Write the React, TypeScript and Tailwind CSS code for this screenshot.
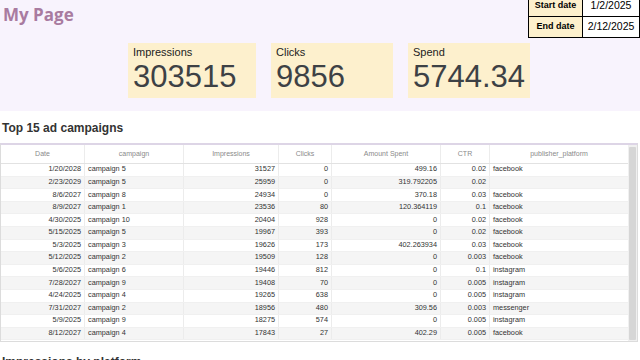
import React from "react";

type Row = {
  date: string;
  campaign: string;
  impressions: number;
  clicks: number;
  spent: string;
  ctr: string;
  platform: string;
};

// only the rows that show above the table's scroll edge
const ROWS: Row[] = [
  { date: "1/20/2028", campaign: "campaign 5", impressions: 31527, clicks: 0, spent: "499.16", ctr: "0.02", platform: "facebook" },
  { date: "2/23/2029", campaign: "campaign 5", impressions: 25959, clicks: 0, spent: "319.792205", ctr: "0.02", platform: "" },
  { date: "8/6/2027", campaign: "campaign 8", impressions: 24934, clicks: 0, spent: "370.18", ctr: "0.03", platform: "facebook" },
  { date: "8/9/2027", campaign: "campaign 1", impressions: 23536, clicks: 80, spent: "120.364119", ctr: "0.1", platform: "facebook" },
  { date: "4/30/2025", campaign: "campaign 10", impressions: 20404, clicks: 928, spent: "0", ctr: "0.02", platform: "facebook" },
  { date: "5/15/2025", campaign: "campaign 5", impressions: 19967, clicks: 393, spent: "0", ctr: "0.02", platform: "facebook" },
  { date: "5/3/2025", campaign: "campaign 3", impressions: 19626, clicks: 173, spent: "402.263934", ctr: "0.03", platform: "facebook" },
  { date: "5/12/2025", campaign: "campaign 2", impressions: 19509, clicks: 128, spent: "0", ctr: "0.003", platform: "facebook" },
  { date: "5/6/2025", campaign: "campaign 6", impressions: 19446, clicks: 812, spent: "0", ctr: "0.1", platform: "instagram" },
  { date: "7/28/2027", campaign: "campaign 9", impressions: 19408, clicks: 70, spent: "0", ctr: "0.005", platform: "instagram" },
  { date: "4/24/2025", campaign: "campaign 4", impressions: 19265, clicks: 638, spent: "0", ctr: "0.005", platform: "instagram" },
  { date: "7/31/2027", campaign: "campaign 2", impressions: 18956, clicks: 480, spent: "309.56", ctr: "0.003", platform: "messenger" },
  { date: "5/9/2025", campaign: "campaign 9", impressions: 18275, clicks: 574, spent: "0", ctr: "0.005", platform: "instagram" },
  { date: "8/12/2027", campaign: "campaign 4", impressions: 17843, clicks: 27, spent: "402.29", ctr: "0.005", platform: "facebook" },
];

const HEADERS = ["Date", "campaign", "Impressions", "Clicks", "Amount Spent", "CTR", "publisher_platform"];

const GRID = "grid grid-cols-[84px_99px_95px_53px_109px_49px_138px]";

function Kpi({ label, value, width }: { label: string; value: string; width: string }) {
  return (
    <div className={`${width} h-[55px] bg-[#fdf0cd] pl-[5px] pt-[3px]`}>
      <div className="text-[11px] leading-[13px] text-[#222]">{label}</div>
      <div className="mt-[1.5px] text-[31px] leading-[31px] text-[#3d4145]">{value}</div>
    </div>
  );
}

export default function App() {
  return (
    <div className="h-[360px] w-[640px] overflow-hidden bg-white font-['Liberation_Sans',Arial,sans-serif] antialiased">
      <header className="h-[111px] bg-[#f8f3fd]">
        <div className="flex h-[43px] items-start justify-between">
          <h1 className="pl-[3px] pt-[3px] font-['Open_Sans',sans-serif] text-[17px] font-bold leading-[24px] text-[#a97ba0]">
            My Page
          </h1>
          <table className="-mt-[5px] border-collapse text-[9px]">
            <tbody>
              <tr className="h-[21px]">
                <td className="w-[54px] border border-black bg-[#fdf0cd] text-center font-bold">Start date</td>
                <td className="w-[57px] border border-black bg-white text-center text-[10.5px]">1/2/2025</td>
              </tr>
              <tr className="h-[21px]">
                <td className="border border-black bg-[#fdf0cd] text-center font-bold">End date</td>
                <td className="border border-black bg-white text-center text-[10.5px]">2/12/2025</td>
              </tr>
            </tbody>
          </table>
        </div>
        <div className="flex gap-[15px] pl-[128px]">
          <Kpi label="Impressions" value="303515" width="w-[128px]" />
          <Kpi label="Clicks" value="9856" width="w-[122px]" />
          <Kpi label="Spend" value="5744.34" width="w-[122px]" />
        </div>
      </header>

      <h2 className="mt-[10px] pl-[2px] text-[12px] font-bold leading-[14px] text-[#333]">Top 15 ad campaigns</h2>

      <div className="mt-[8px] flex w-[638px] border border-t-2 border-[#dcdcdc] border-t-[#ddd5e6]">
        <div className="flex-1">
          <div className={`${GRID} h-[19px] border-b border-[#e2e2e2] text-[7px] text-[#8a8a8a]`}>
            {HEADERS.map((h) => (
              <div key={h} className="flex items-center justify-center border-r border-[#ececec] last:border-r-0">
                {h}
              </div>
            ))}
          </div>
          <div className="h-[176.5px] overflow-hidden text-[7.3px] text-[#333]">
            {ROWS.map((r, i) => (
              <div
                key={i}
                className={`${GRID} h-[12.6px] items-center border-b border-[#f0f0f0] ${i % 2 ? "bg-[#f5f5f5]" : "bg-white"}`}
              >
                <div className="flex h-full items-center justify-end border-r border-[#ececec] pr-[3px]">{r.date}</div>
                <div className="flex h-full items-center border-r border-[#ececec] pl-[3px]">{r.campaign}</div>
                <div className="flex h-full items-center justify-end border-r border-[#ececec] pr-[3px]">{r.impressions}</div>
                <div className="flex h-full items-center justify-end border-r border-[#ececec] pr-[3px]">{r.clicks}</div>
                <div className="flex h-full items-center justify-end border-r border-[#ececec] pr-[3px]">{r.spent}</div>
                <div className="flex h-full items-center justify-end border-r border-[#ececec] pr-[3px]">{r.ctr}</div>
                <div className="flex h-full items-center pl-[3px]">{r.platform}</div>
              </div>
            ))}
          </div>
        </div>
        <div className="w-[10px] bg-[#f0f0f0] px-[1px] pt-[2px] pb-[1px]">
          <div className="h-full rounded-[1px] bg-[#d6d6d6]" />
        </div>
      </div>

      <h2 className="mt-[13px] pl-[2px] text-[12px] font-bold leading-[14px] text-[#333]">Impressions by platform</h2>
    </div>
  );
}
